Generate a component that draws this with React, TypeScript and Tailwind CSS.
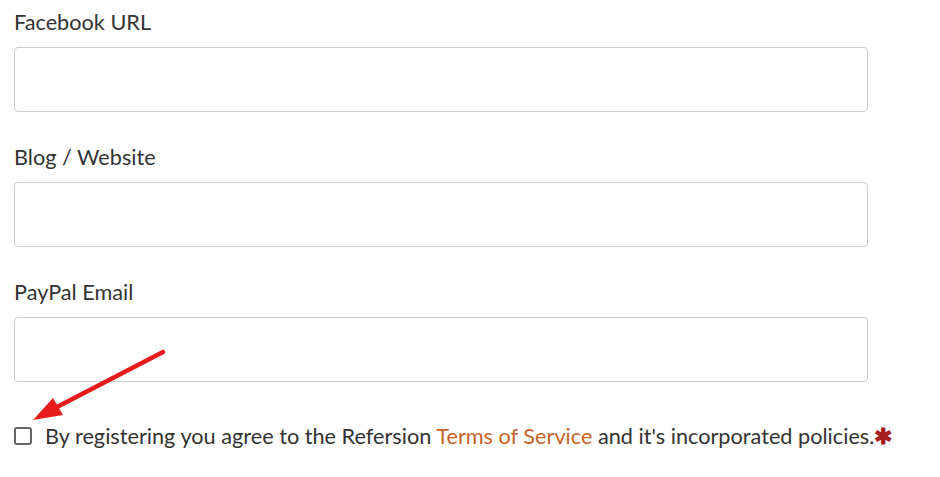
import React from "react";

function Field({ label }: { label: string }) {
  return (
    <div className="flex flex-col">
      <label className="text-[21.7px] leading-[28px] text-[#333]">{label}</label>
      <div className="mt-[11px] h-[65px] w-[854px] rounded-[4px] border border-[#cccccc] bg-white" />
    </div>
  );
}

export default function App() {
  return (
    <div
      className="relative h-[477px] w-[940px] bg-white pl-[14px] pt-[8px]"
      style={{ fontFamily: "Lato, 'Open Sans', sans-serif" }}
    >
      <div className="flex flex-col gap-[31px]">
        <Field label="Facebook URL" />
        <Field label="Blog / Website" />
        <Field label="PayPal Email" />
      </div>
      <div className="mt-[40px] flex items-center text-[21.7px] leading-[28px] text-[#333]">
        <span className="mr-[13px] inline-block h-[18px] w-[18px] rounded-[3px] border-2 border-[#666]" />
        <span>
          By registering you agree to the Refersion{" "}
          <span className="text-[#c8622a]">Terms of Service</span> and it's incorporated policies.
          <span className="text-[#a51d1d] font-bold">✱</span>
        </span>
      </div>
      <svg className="absolute left-0 top-0" width="940" height="477" viewBox="0 0 940 477">
        <line x1="163" y1="352" x2="55" y2="408" stroke="#e61c1c" strokeWidth="4.5" strokeLinecap="round" />
        <polygon points="33,420 53,398 63,415" fill="#e61c1c" />
      </svg>
    </div>
  );
}
